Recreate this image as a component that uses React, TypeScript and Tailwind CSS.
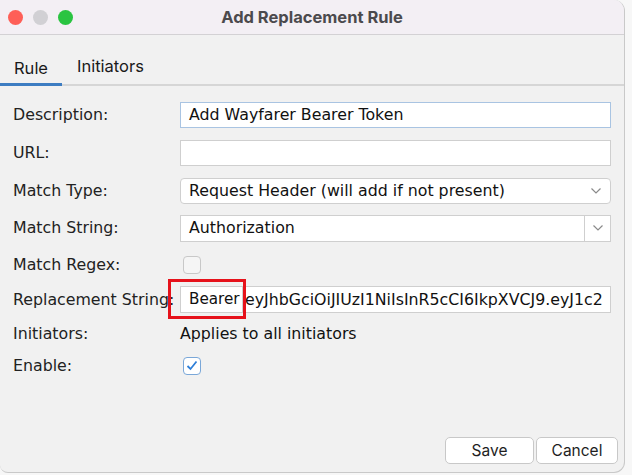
import React from "react";

const font = { fontFamily: '"DejaVu Sans", "Liberation Sans", sans-serif' };
const sysFont = { fontFamily: 'Inter, "Open Sans", "Liberation Sans", sans-serif' };

function Chevron() {
  return (
    <svg width="12" height="8" viewBox="0 0 12 8">
      <path d="M1.5 1.5 L6 6 L10.5 1.5" fill="none" stroke="#8a8a8a" strokeWidth="1.2" />
    </svg>
  );
}

function Row({ h, label, children }: { h: string; label: string; children?: React.ReactNode }) {
  return (
    <div className={`flex items-center ${h}`}>
      <div className="w-[180px] shrink-0 pl-[13px] text-[15.8px] text-[#222] whitespace-nowrap">{label}</div>
      <div className="flex-1 flex items-center">{children}</div>
    </div>
  );
}

export default function App() {
  return (
    <div className="w-[632px] h-[475px] bg-[#f7f7f7] relative overflow-hidden" style={font}>
      <div className="w-[625px] h-[473px] bg-[#f1f1f1] rounded-tr-[11px] rounded-br-[11px] rounded-bl-[8px] border-r border-b border-[#c9c9c9] flex flex-col overflow-hidden">
        {/* title bar */}
        <div className="h-[35px] bg-[#f3eff4] border-b border-[#d3d1d4] flex items-center relative shrink-0">
          <div className="flex items-center gap-[10px] pl-[8px]">
            <span className="w-[15px] h-[15px] rounded-full bg-[#fe5f57]" />
            <span className="w-[15px] h-[15px] rounded-full bg-[#d1d0d4]" />
            <span className="w-[15px] h-[15px] rounded-full bg-[#2ac441]" />
          </div>
          <div className="absolute left-0 right-0 text-center text-[16.5px] font-bold text-[#4b4a4d]" style={sysFont}>
            Add Replacement Rule
          </div>
        </div>
        {/* tabs */}
        <div className="h-[51px] shrink-0 border-b-2 border-[#d6d6d6] flex items-end relative" style={sysFont}>
          <div className="w-[62px] h-[30px] flex items-start justify-center border-b-[3px] border-[#3d7dc2] -mb-[2px] text-[16.5px] text-[#1a1a1a]">
            Rule
          </div>
          <div className="h-[30px] pl-[15px] text-[16.5px] text-[#1a1a1a]">Initiators</div>
        </div>
        {/* form */}
        <div className="pt-[10px] flex flex-col">
          <Row h="h-[38px]" label="Description:">
            <div className="w-[431px] h-[26px] bg-white border border-[#a9c4e2] flex items-center px-[8px] text-[15.8px] text-[#111]">
              Add Wayfarer Bearer Token
            </div>
          </Row>
          <Row h="h-[38px]" label="URL:">
            <div className="w-[431px] h-[26px] bg-white border border-[#cfcfcf]" />
          </Row>
          <Row h="h-[37px]" label="Match Type:">
            <div className="w-[431px] h-[26px] bg-white border border-[#cfcfcf] rounded-[4px] flex items-center justify-between pl-[8px] pr-[8px] text-[15.8px] text-[#111]">
              <span>Request Header (will add if not present)</span>
              <Chevron />
            </div>
          </Row>
          <Row h="h-[38px]" label="Match String:">
            <div className="w-[431px] h-[27px] flex">
              <div className="flex-1 bg-white border border-[#cfcfcf] flex items-center px-[8px] text-[15.8px] text-[#111]">
                Authorization
              </div>
              <div className="w-[26px] bg-white border border-l-0 border-[#cfcfcf] flex items-center justify-center">
                <Chevron />
              </div>
            </div>
          </Row>
          <Row h="h-[35px]" label="Match Regex:">
            <div className="ml-[3px] w-[18px] h-[18px] rounded-[4px] border border-[#c8c8c8] bg-[#f5f5f5]" />
          </Row>
          <Row h="h-[35px]" label="Replacement String:">
            <div className="relative w-[431px] h-[27px] bg-white border border-[#cfcfcf] flex items-center text-[15.8px] text-[#111] whitespace-nowrap overflow-visible">
              <div className="h-[25px] w-[62px] shrink-0 border-r border-[#cfcfcf] flex items-center pl-[8px] text-[15.2px]">Bearer</div>
              <div className="overflow-hidden pl-[2px] w-[365px]">eyJhbGciOiJIUzI1NiIsInR5cCI6IkpXVCJ9.eyJ1c2</div>
              <div className="absolute left-[-13px] top-[-8px] w-[78px] h-[40px] border-[3px] border-[#e6121b]" />
            </div>
          </Row>
          <Row h="h-[33px]" label="Initiators:">
            <span className="text-[15.8px] text-[#111]">Applies to all initiators</span>
          </Row>
          <Row h="h-[31px]" label="Enable:">
            <div className="ml-[3px] w-[18px] h-[18px] rounded-[4px] border border-[#7aa7d8] bg-white flex items-center justify-center">
              <svg width="12" height="11" viewBox="0 0 12 11">
                <path d="M1.5 6 L4.5 9 L10.5 1.5" fill="none" stroke="#2f7fd8" strokeWidth="1.8" />
              </svg>
            </div>
          </Row>
        </div>
        <div className="flex-1" />
        <div className="flex justify-end pr-[6px] pb-[8px] gap-[2px]" style={sysFont}>
          <button className="w-[89px] h-[27px] bg-white border border-[#c8c8c8] rounded-[5px] text-[15.5px] text-[#1e1e1e]">Save</button>
          <button className="w-[82px] h-[27px] bg-white border border-[#c8c8c8] rounded-[5px] text-[15.5px] text-[#1e1e1e]">Cancel</button>
        </div>
      </div>
    </div>
  );
}
